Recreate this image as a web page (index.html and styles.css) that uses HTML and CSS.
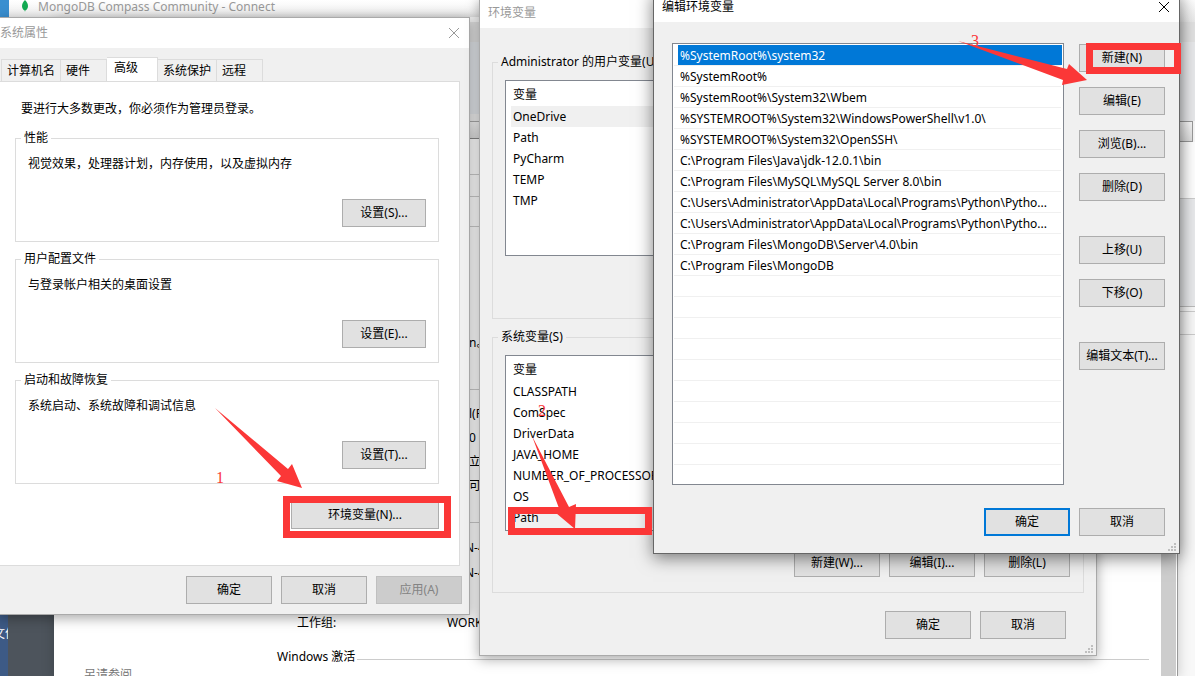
FILE: index.html
```html
<!DOCTYPE html>
<html lang="zh-CN">
<head>
  <meta charset="UTF-8">
  <meta name="viewport" content="width=device-width, initial-scale=1.0">
  <title>环境变量</title>
  <link rel="stylesheet" href="styles.css">
</head>
<body>

  <div class="desktop">
    <span class="desktop-icon">文件</span>

    <!-- MongoDB Compass -->
    <div class="window compass">
      <div class="compass-title">
        <svg class="leaf" width="8" height="12" viewBox="0 0 8 12">
          <path d="M4 0C6 2 7 4 7 6.200C7 8.500 5.500 10 4.300 10.600L4 12L3.700 10.600C2.500 10 1 8.500 1 6.200C1 4 2 2 4 0Z" fill="#13aa52"/>
        </svg>
        MongoDB Compass Community - Connect
      </div>
      <div class="compass-bar"></div>
      <div class="compass-nav"></div>
      <div class="compass-tabs"></div>
      <div class="compass-row"></div>
      <div class="compass-side"></div>
      <div class="compass-gap"></div>
      <div class="compass-foot"></div>
    </div>

    <!-- System information -->
    <div class="window sysinfo">
      <div class="info-caption"></div>
      <div class="info-bar"></div>
      <div class="info-nav"></div>
      <div class="info-tools"></div>
      <div class="info-page">
        <div class="info-body">
          <div class="rule rule-a"></div>
          <div class="rule rule-b"></div>
          <div class="rule rule-c"></div>
          <p class="info-note">n。</p>
          <div class="rule"></div>
          <ul class="specs">
            <li>l(R)</li>
            <li>0 G</li>
            <li>立扌</li>
            <li>可</li>
          </ul>
          <div class="rule"></div>
          <ul class="names">
            <li>N-4</li>
            <li>N-4</li>
          </ul>
          <div class="workgroup"><span>工作组:</span><span>WORKGROUP</span></div>
          <div class="activation"><span>Windows 激活</span></div>
          <div class="see-also">另请参阅</div>
        </div>
        <div class="scrollbar"></div>
      </div>
    </div>

    <!-- System properties -->
    <div class="window props">
      <div class="titlebar">
        <span>系统属性</span>
        <button class="close" aria-label="关闭">
          <svg width="12" height="12" viewBox="0 0 12 12"><path d="M1 1L11 11M11 1L1 11" stroke="currentColor" fill="none"/></svg>
        </button>
      </div>
      <div class="tabs" role="tablist">
        <button class="tab" role="tab">计算机名</button>
        <button class="tab" role="tab">硬件</button>
        <button class="tab active" role="tab" aria-selected="true">高级</button>
        <button class="tab" role="tab">系统保护</button>
        <button class="tab" role="tab">远程</button>
      </div>
      <div class="tab-panel" role="tabpanel">
        <p class="admin-note">要进行大多数更改，你必须作为管理员登录。</p>
        <fieldset class="group">
          <legend>性能</legend>
          <p>视觉效果，处理器计划，内存使用，以及虚拟内存</p>
          <button class="btn">设置(S)...</button>
        </fieldset>
        <fieldset class="group">
          <legend>用户配置文件</legend>
          <p>与登录帐户相关的桌面设置</p>
          <button class="btn">设置(E)...</button>
        </fieldset>
        <fieldset class="group">
          <legend>启动和故障恢复</legend>
          <p>系统启动、系统故障和调试信息</p>
          <button class="btn">设置(T)...</button>
        </fieldset>
        <button class="btn env-btn">环境变量(N)...</button>
      </div>
      <div class="buttons">
        <button class="btn">确定</button>
        <button class="btn">取消</button>
        <button class="btn" disabled>应用(A)</button>
      </div>
    </div>

    <!-- Environment variables -->
    <div class="window env">
      <div class="titlebar"><span>环境变量</span></div>
      <fieldset class="vars user-vars">
        <legend>Administrator 的用户变量(U)</legend>
        <div class="var-list">
          <table>
            <thead><tr><th>变量</th></tr></thead>
            <tbody>
              <tr class="marked"><td>OneDrive</td></tr>
              <tr><td>Path</td></tr>
              <tr><td>PyCharm</td></tr>
              <tr><td>TEMP</td></tr>
              <tr><td>TMP</td></tr>
            </tbody>
          </table>
        </div>
      </fieldset>
      <fieldset class="vars">
        <legend>系统变量(S)</legend>
        <div class="var-list">
          <table>
            <thead><tr><th>变量</th></tr></thead>
            <tbody>
              <tr><td>CLASSPATH</td></tr>
              <tr><td>ComSpec</td></tr>
              <tr><td>DriverData</td></tr>
              <tr><td>JAVA_HOME</td></tr>
              <tr><td>NUMBER_OF_PROCESSORS</td></tr>
              <tr><td>OS</td></tr>
              <tr class="marked"><td>Path</td></tr>
            </tbody>
          </table>
        </div>
        <div class="buttons">
          <button class="btn">新建(W)...</button>
          <button class="btn">编辑(I)...</button>
          <button class="btn">删除(L)</button>
        </div>
      </fieldset>
      <div class="buttons">
        <button class="btn">确定</button>
        <button class="btn">取消</button>
      </div>
      <svg class="grip" width="8" height="8" viewBox="0 0 8 8"><path d="M6 0h2v2h-2zM3 3h2v2h-2zM6 3h2v2h-2zM0 6h2v2h-2zM3 6h2v2h-2zM6 6h2v2h-2z" fill="#bfbfbf"/></svg>
    </div>

    <!-- Edit environment variable -->
    <div class="window edit">
      <div class="titlebar">
        <span>编辑环境变量</span>
        <button class="close" aria-label="关闭">
          <svg width="12" height="12" viewBox="0 0 12 12"><path d="M1 1L11 11M11 1L1 11" stroke="currentColor" fill="none"/></svg>
        </button>
      </div>
      <div class="edit-main">
        <ul class="paths" role="listbox" aria-label="编辑环境变量">
          <li class="selected" role="option" aria-selected="true">%SystemRoot%\system32</li>
          <li role="option">%SystemRoot%</li>
          <li role="option">%SystemRoot%\System32\Wbem</li>
          <li role="option">%SYSTEMROOT%\System32\WindowsPowerShell\v1.0\</li>
          <li role="option">%SYSTEMROOT%\System32\OpenSSH\</li>
          <li role="option">C:\Program Files\Java\jdk-12.0.1\bin</li>
          <li role="option">C:\Program Files\MySQL\MySQL Server 8.0\bin</li>
          <li role="option">C:\Users\Administrator\AppData\Local\Programs\Python\Pytho...</li>
          <li role="option">C:\Users\Administrator\AppData\Local\Programs\Python\Pytho...</li>
          <li role="option">C:\Program Files\MongoDB\Server\4.0\bin</li>
          <li role="option">C:\Program Files\MongoDB</li>
        </ul>
        <div class="side">
          <div class="side-group">
            <button class="btn">新建(N)</button>
            <button class="btn">编辑(E)</button>
            <button class="btn">浏览(B)...</button>
            <button class="btn">删除(D)</button>
          </div>
          <div class="side-group">
            <button class="btn">上移(U)</button>
            <button class="btn">下移(O)</button>
          </div>
          <div class="side-group">
            <button class="btn">编辑文本(T)...</button>
          </div>
        </div>
      </div>
      <div class="buttons">
        <button class="btn default">确定</button>
        <button class="btn">取消</button>
      </div>
      <svg class="grip" width="8" height="8" viewBox="0 0 8 8"><path d="M6 0h2v2h-2zM3 3h2v2h-2zM6 3h2v2h-2zM0 6h2v2h-2zM3 6h2v2h-2zM6 6h2v2h-2z" fill="#bfbfbf"/></svg>
    </div>

    <!-- Step markers -->
    <svg class="marks" width="1195" height="676" viewBox="0 0 1195 676">
      <g fill="none" stroke="#fb3737" stroke-width="7">
        <rect x="286.500" y="499.500" width="161" height="35"/>
        <rect x="511.500" y="510.500" width="137" height="21"/>
        <rect x="1089.500" y="46.500" width="88" height="24"/>
      </g>
      <g fill="#fb3737">
        <path d="M215 408L288 469L292 464L302 488L277 481L281 476Z"/>
        <path d="M532 436L569 507L576 504L575 529L556 513L560 511Z"/>
        <path d="M958 41L1067 69L1069 64L1087 80L1062 85L1063 80Z"/>
        <text x="216" y="483">1</text>
        <text x="538" y="416">2</text>
        <text x="971" y="46">3</text>
      </g>
    </svg>
  </div>

</body>
</html>
```
FILE: styles.css
```css
* {
  box-sizing: border-box;
}
body {
  margin: 0;
  font-family: "Noto Sans", "Noto Sans CJK SC", sans-serif;
  font-size: 12px;
  line-height: 16px;
  color: #000;
}
p, ul, fieldset {
  margin: 0;
  padding: 0;
}
ul {
  list-style: none;
}
.desktop {
  position: relative;
  height: 100vh;
  overflow: hidden;
  background: linear-gradient(90deg, #3d5a85 8px, #4d545c 8px 54px, #f8f8f8 54px);
}
.desktop-icon {
  position: absolute;
  left: -7px;
  top: 626px;
  width: 15px;
  overflow: hidden;
  white-space: nowrap;
  color: #fff;
}
.window {
  position: absolute;
  display: flex;
  flex-direction: column;
}

/* Compass, mostly hidden behind the dialogs */
.compass {
  left: 0;
  right: 0;
  top: 0;
  height: 614px;
  background: #f8f8f8;
}
.compass-title {
  display: flex;
  gap: 9px;
  height: 22px;
  padding-left: 12px;
  border-left: 9px solid #3a8fd0;
  background: linear-gradient(#fff, #e9e9e9);
  line-height: 14px;
  color: #999;
}
.compass-bar {
  height: 20px;
  background: #e2e2e2;
}
.compass-nav {
  height: 79px;
  background: #e8e9eb;
}
.compass-tabs {
  height: 21px;
  margin-right: 2px;
  border: 1px solid #999;
  background: linear-gradient(#f8f8f8, #ddd);
}
.compass-row {
  height: 57px;
  border-bottom: 1px solid #ccc;
  background: #fff;
}
.compass-side {
  height: 108px;
  border-bottom: 1px solid #bbb;
  background: #e9eaec;
}
.compass-gap {
  height: 5px;
  border-bottom: 1px solid #ccc;
}
.compass-foot {
  height: 23px;
  border-bottom: 1px solid #ccc;
}

/* System information window */
.sysinfo {
  left: 54px;
  right: 17px;
  top: 17px;
  bottom: 0;
  border-right: 1px solid #999;
  background: #fff;
  box-shadow: 0 2px 12px rgba(0, 0, 0, 0.2);
}
.info-caption {
  flex: none;
  height: 5px;
  background: #f4f4f4;
}
.info-bar {
  flex: none;
  height: 20px;
  background: #e0e0e0;
}
.info-nav {
  flex: none;
  height: 79px;
  border-bottom: 7px solid #eee;
  background: #e3e6ea;
}
.info-tools {
  flex: none;
  height: 18px;
  border-top: 1px solid #aaa;
  border-bottom: 1px solid #888;
  background: linear-gradient(#f4f4f4, #ddd);
}
.info-page {
  display: flex;
  flex: 1;
  overflow: hidden;
}
.info-body {
  flex: 1;
}
.scrollbar {
  width: 15px;
  margin-right: 1px;
  background: #cdcdcd;
}
.rule {
  height: 1px;
  background: #ccc;
}
.rule-a {
  margin-top: 35px;
}
.rule-b {
  margin-top: 21px;
}
.rule-c {
  margin-top: 29px;
}
.info-note {
  padding: 108px 0 38px 415px;
}
.specs {
  padding: 12px 0 24px 415px;
  line-height: 24px;
}
.names {
  padding: 12px 0 25px 411px;
  line-height: 25px;
}
.workgroup {
  display: grid;
  grid-template-columns: 150px 1fr;
  padding-left: 243px;
  line-height: 25px;
}
.activation {
  display: flex;
  align-items: center;
  gap: 2px;
  margin: 12px 12px 0 223px;
  line-height: 20px;
}
.activation::after {
  content: "";
  flex: 1;
  height: 1px;
  margin-top: 4px;
  background: #ccc;
}
.see-also {
  padding-left: 30px;
  color: #777;
}

/* Dialog parts */
.titlebar {
  display: flex;
  justify-content: space-between;
  align-items: center;
  background: #fff;
}
.close {
  display: flex;
  padding: 0;
  border: 0;
  background: none;
  color: inherit;
}
.btn {
  width: 86px;
  height: 28px;
  padding: 0;
  border: 1px solid #adadad;
  background: #e1e1e1;
  font: inherit;
  color: #000;
  white-space: nowrap;
}
.btn.default {
  border: 2px solid #0078d7;
}
.btn:disabled {
  border-color: #bfbfbf;
  background: #ccc;
  color: #838383;
}
.buttons {
  display: flex;
  justify-content: flex-end;
  gap: 9px;
}
.grip {
  position: absolute;
  right: 3px;
  bottom: 2px;
}

/* System properties */
.props {
  left: -1px;
  top: 17px;
  width: 471px;
  border: 1px solid #aaa;
  background: #f0f0f0;
  box-shadow: 0 3px 12px rgba(0, 0, 0, 0.35);
}
.props .titlebar {
  height: 30px;
  padding-right: 9px;
  color: #999;
}
.tabs {
  display: flex;
  align-items: flex-end;
  padding: 9px 0 0 1px;
}
.tab {
  height: 22px;
  padding: 0 5px;
  border: 1px solid #dcdcdc;
  border-bottom: 0;
  border-left-width: 0;
  background: #f0f0f0;
  font: inherit;
  color: #000;
  text-align: left;
}
.tab:first-child {
  border-left-width: 1px;
}
.tab:nth-child(2), .tab:last-child {
  padding-right: 16px;
}
.tab.active {
  height: 25px;
  margin-bottom: -1px;
  padding: 0 19px 4px 7px;
  background: #fff;
}
.tab-panel {
  display: flex;
  flex-direction: column;
  gap: 18px;
  margin-right: 9px;
  padding: 19px 20px 36px 15px;
  border: 1px solid #dcdcdc;
  border-left: 0;
  background: #fff;
}
.admin-note {
  padding-left: 6px;
}
.group {
  height: 112px;
  margin-top: -5px;
  padding: 10px 12px 14px;
  border: 1px solid #dcdcdc;
}
.group + .group {
  margin-top: -9px;
}
.group legend, .vars legend {
  margin-left: -7px;
  padding: 0 3px;
}
.group .btn {
  display: block;
  width: 84px;
  margin: 27px 0 0 auto;
}
.env-btn {
  width: 148px;
  margin-top: -1px;
  align-self: flex-end;
}
.props > .buttons {
  padding: 10px 7px;
}

/* Environment variables */
.env {
  left: 479px;
  top: -3px;
  width: 618px;
  border: 1px solid #aaa;
  background: #f0f0f0;
  box-shadow: 0 3px 12px rgba(0, 0, 0, 0.35);
}
.env .titlebar {
  height: 30px;
  padding-left: 8px;
  color: #999;
}
.vars {
  margin: 10px 12px 0;
  padding: 10px 13px 15px 12px;
  border: 1px solid #dcdcdc;
}
.user-vars {
  height: 265px;
  margin-top: 26px;
}
.var-list {
  height: 176px;
  padding: 2px 5px;
  border: 1px solid #828790;
  background: #fff;
  overflow: hidden;
}
.var-list table {
  width: 100%;
  border-collapse: collapse;
}
.var-list th, .var-list td {
  height: 21px;
  padding: 0 2px;
  font-weight: normal;
  text-align: left;
}
.var-list th {
  height: 23px;
}
.marked {
  background: #f0f0f0;
}
.vars .buttons {
  padding-top: 18px;
}
.env > .buttons {
  padding: 18px 30px 16px;
}

/* Edit dialog */
.edit {
  left: 653px;
  top: -9px;
  width: 527px;
  border: 1px solid #666;
  background: #f0f0f0;
  box-shadow: 0 4px 16px rgba(0, 0, 0, 0.5);
}
.edit .titlebar {
  height: 30px;
  padding: 0 9px 0 8px;
}
.edit-main {
  display: flex;
  gap: 15px;
  padding: 21px 14px 0 18px;
}
.paths {
  flex: 1;
  height: 442px;
  padding: 1px;
  border: 1px solid #828790;
  background: repeating-linear-gradient(#fff 0 20px, #f0f0f0 20px 21px) 1px 1px no-repeat #fff;
  background-size: 387px 420px;
}
.paths li {
  height: 20px;
  margin: 0 0 1px 4px;
  padding-left: 2px;
  line-height: 22px;
  white-space: nowrap;
}
.paths .selected {
  background: #0078d7;
  color: #fff;
}
.side {
  display: flex;
  flex-direction: column;
  gap: 35px;
  padding-top: 1px;
}
.side-group {
  display: flex;
  flex-direction: column;
  gap: 15px;
}
.edit > .buttons {
  padding: 23px 14px 17px;
}

/* Red arrows and frames */
.marks {
  position: absolute;
  left: 0;
  top: 0;
  pointer-events: none;
}
.marks text {
  font-family: "Liberation Serif", serif;
  font-size: 16px;
}
```
